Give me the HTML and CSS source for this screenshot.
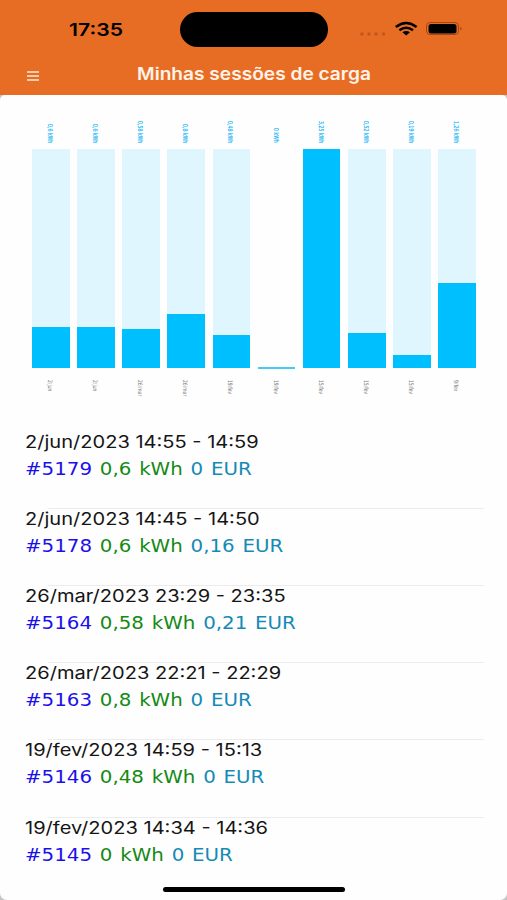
FILE: index.html
```html
<!DOCTYPE html>
<html lang="pt">
<head>
<meta charset="utf-8">
<title>Minhas sessões de carga</title>
<link rel="stylesheet" href="styles.css">
</head>
<body>
<div class="phone">
  <header>
    <div class="status">
      <span class="time">17:35</span>
      <span class="island"></span>
      <svg class="signals" width="106" height="20" viewBox="0 0 106 20">
        <g fill="#c2571f"><circle cx="5" cy="14" r="1.800"/><circle cx="12" cy="14" r="1.800"/><circle cx="19" cy="14" r="1.800"/><circle cx="26.500" cy="14" r="1.800"/></g>
        <g fill="none" stroke="#000" stroke-width="2.500"><path d="M38.800 7Q49.200-1 59.600 7"/><path d="M42.400 10.300Q49.200 5.200 56 10.300"/></g>
        <path d="M45.400 12.300Q49.200 9.500 53 12.300L49.200 15.500Z"/>
        <rect x="69.500" y="2.500" width="32" height="12" rx="3.500" fill="none" stroke="#a64517" stroke-width="1"/>
        <rect x="71.500" y="4" width="28" height="9.500" rx="2.500"/>
        <path d="M103.500 7Q105.500 8.500 103.500 10.500Z" fill="#8c2c11"/>
      </svg>
    </div>
    <div class="nav">
      <svg class="menu" width="12" height="10" viewBox="0 0 12 10"><path d="M0 1H12M0 5H12M0 9H12" stroke="#ffe9d9" stroke-width="1.700"/></svg>
      <h1>Minhas sessões de carga</h1>
    </div>
  </header>
  <main>
    <section class="chart">
      <div class="col"><span class="val">0,6 kWh</span><div class="track"><div class="fill" style="height:18.600%"></div></div><span class="day">2/jun</span></div>
      <div class="col"><span class="val">0,6 kWh</span><div class="track"><div class="fill" style="height:18.600%"></div></div><span class="day">2/jun</span></div>
      <div class="col"><span class="val">0,58 kWh</span><div class="track"><div class="fill" style="height:18%"></div></div><span class="day">26/mar</span></div>
      <div class="col"><span class="val">0,8 kWh</span><div class="track"><div class="fill" style="height:24.700%"></div></div><span class="day">26/mar</span></div>
      <div class="col"><span class="val">0,48 kWh</span><div class="track"><div class="fill" style="height:14.900%"></div></div><span class="day">19/fev</span></div>
      <div class="col"><span class="val">0 kWh</span><div class="track empty"></div><span class="day">19/fev</span></div>
      <div class="col"><span class="val">3,25 kWh</span><div class="track"><div class="fill" style="height:100%"></div></div><span class="day">15/fev</span></div>
      <div class="col"><span class="val">0,52 kWh</span><div class="track"><div class="fill" style="height:16.100%"></div></div><span class="day">15/fev</span></div>
      <div class="col"><span class="val">0,19 kWh</span><div class="track"><div class="fill" style="height:5.900%"></div></div><span class="day">15/fev</span></div>
      <div class="col"><span class="val">1,26 kWh</span><div class="track"><div class="fill" style="height:38.800%"></div></div><span class="day">9/fev</span></div>
    </section>
    <section class="list">
      <article><p class="when">2/jun/2023 14:55 - 14:59</p><p class="info"><span class="id">#5179</span> <span class="kwh">0,6 kWh</span> <span class="eur">0 EUR</span></p></article>
      <article><p class="when">2/jun/2023 14:45 - 14:50</p><p class="info"><span class="id">#5178</span> <span class="kwh">0,6 kWh</span> <span class="eur">0,16 EUR</span></p></article>
      <article><p class="when">26/mar/2023 23:29 - 23:35</p><p class="info"><span class="id">#5164</span> <span class="kwh">0,58 kWh</span> <span class="eur">0,21 EUR</span></p></article>
      <article><p class="when">26/mar/2023 22:21 - 22:29</p><p class="info"><span class="id">#5163</span> <span class="kwh">0,8 kWh</span> <span class="eur">0 EUR</span></p></article>
      <article><p class="when">19/fev/2023 14:59 - 15:13</p><p class="info"><span class="id">#5146</span> <span class="kwh">0,48 kWh</span> <span class="eur">0 EUR</span></p></article>
      <article><p class="when">19/fev/2023 14:34 - 14:36</p><p class="info"><span class="id">#5145</span> <span class="kwh">0 kWh</span> <span class="eur">0 EUR</span></p></article>
    </section>
  </main>
  <div class="home"></div>
</div>
</body>
</html>
```
FILE: styles.css
```css
* { box-sizing: border-box; }
body { margin: 0; background: #c4c4c4; font-family: Inter, "Liberation Sans", sans-serif; }
.phone { position: relative; width: 507px; height: 900px; overflow: hidden; background: #c4c4c4; display: flex; flex-direction: column; }
header { height: 95px; flex: none; background: #e86d24; }
.status { height: 59px; display: grid; grid-template-columns: 180px 148px 1fr; align-items: center; }
.time { font-size: 17.5px; font-weight: 600; line-height: 20px; padding-left: 69px; transform: scaleX(1.21); transform-origin: 69px 50%; white-space: nowrap; }
.island { height: 35px; border-radius: 18px; background: #000; }
.signals { margin-left: 29px; }
.nav { position: relative; height: 30px; display: flex; align-items: center; justify-content: center; }
.menu { position: absolute; left: 27px; top: 12px; }
h1 { margin: 0; color: #fff3e9; font-size: 17px; font-weight: 600; line-height: 30px; transform: scaleX(1.125); white-space: nowrap; }
main { flex: 1; background: #fefefe; border-radius: 5px 5px 7px 7px; }
.chart { height: 333.6px; padding: 20px 31px 0 32px; display: flex; justify-content: space-between; }
.col { width: 37.5px; display: flex; flex-direction: column; align-items: center; }
.val, .day { writing-mode: vertical-rl; font-family: "DejaVu Sans", sans-serif; line-height: 6px; white-space: nowrap; transform: scaleX(1.35) translateX(-1px); }
.val { height: 28px; text-align: right; font-size: 4.7px; color: #18b8f5; -webkit-text-stroke: .15px #18b8f5; }
.track { width: 100%; height: 219px; margin-top: 6px; background: #dff6fe; display: flex; align-items: flex-end; }
.fill { width: 100%; background: #00bfff; }
.empty { background: none; border-bottom: 2px solid #45cbf5; transform: translateY(1px); }
.day { margin-top: 12px; font-size: 4.5px; color: #777; }
.list { padding: 0 23px 0 25px; }
article { position: relative; height: 77.2px; }
article + article::before { content: ""; position: absolute; left: 23px; right: 0; top: 2px; height: 1px; background: #ececee; }
p { margin: 0; width: max-content; height: 27px; line-height: 27px; font-size: 17px; white-space: nowrap; transform-origin: 0 50%; }
.when { color: #151515; transform: scaleX(1.18); }
.info { font-family: "DejaVu Sans", sans-serif; word-spacing: 1.3px; transform: scaleX(1.165); }
.id { color: #1c10ea; }
.kwh { color: #158a15; }
.eur { color: #158ab5; }
.home { position: absolute; left: 163px; top: 887px; width: 182px; height: 5px; border-radius: 3px; background: #000; }
```
